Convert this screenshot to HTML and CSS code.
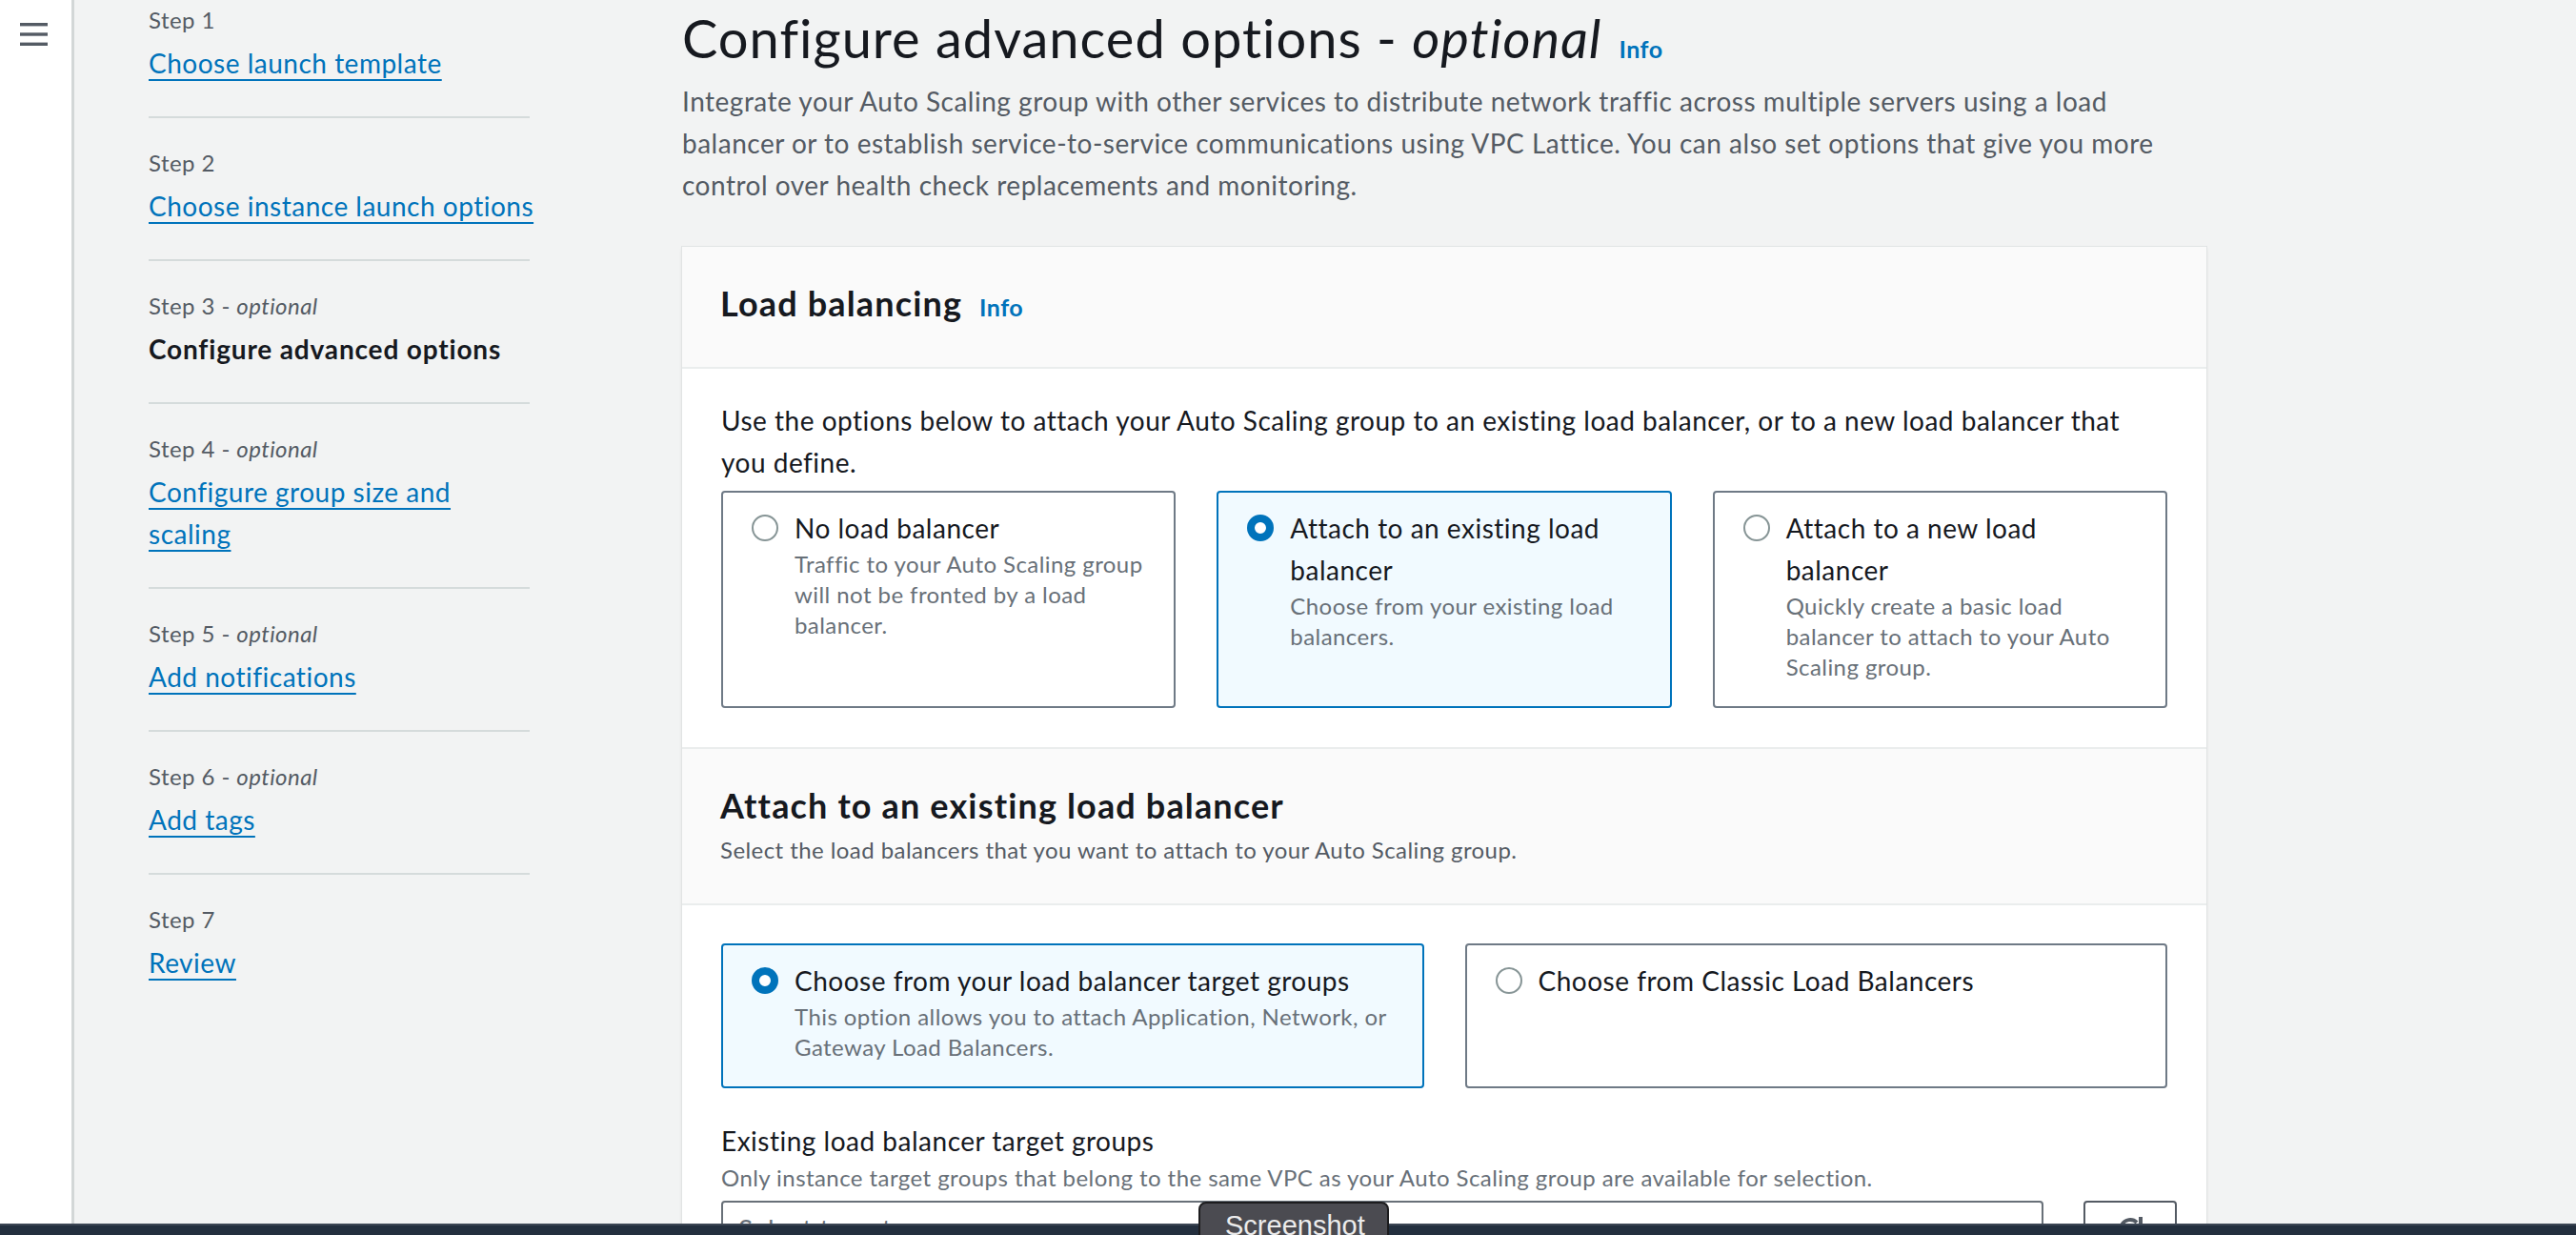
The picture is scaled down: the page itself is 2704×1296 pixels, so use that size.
FILE: index.html
```html
<!DOCTYPE html>
<html lang="en">
<head>
<meta charset="utf-8">
<title>Configure advanced options</title>
<link rel="stylesheet" href="styles.css">
</head>
<body>
<div class="app">
  <aside class="rail">
    <svg width="29" height="24" viewBox="0 0 29 24" aria-hidden="true"><rect x="0" y="0" width="29" height="3.4" fill="#545b64"/><rect x="0" y="10.3" width="29" height="3.4" fill="#545b64"/><rect x="0" y="20.6" width="29" height="3.4" fill="#545b64"/></svg>
  </aside>
  <nav class="steps">
    <ol>
      <li><div class="step-label">Step 1</div><div class="step-link"><a href="#">Choose launch template</a></div></li>
      <li><div class="step-label">Step 2</div><div class="step-link"><a href="#">Choose instance launch options</a></div></li>
      <li><div class="step-label">Step 3 - <i>optional</i></div><div class="step-link current">Configure advanced options</div></li>
      <li><div class="step-label">Step 4 - <i>optional</i></div><div class="step-link"><a href="#">Configure group size and scaling</a></div></li>
      <li><div class="step-label">Step 5 - <i>optional</i></div><div class="step-link"><a href="#">Add notifications</a></div></li>
      <li><div class="step-label">Step 6 - <i>optional</i></div><div class="step-link"><a href="#">Add tags</a></div></li>
      <li><div class="step-label">Step 7</div><div class="step-link"><a href="#">Review</a></div></li>
    </ol>
  </nav>
  <main class="content">
    <header class="page-head">
      <h1 class="page-title">Configure advanced options - <i>optional</i><a class="info" href="#">Info</a></h1>
      <p class="page-desc">Integrate your Auto Scaling group with other services to distribute network traffic across multiple servers using a load balancer or to establish service-to-service communications using VPC Lattice. You can also set options that give you more control over health check replacements and monitoring.</p>
    </header>
    <section class="container">
      <div class="c-head c-head-first">
        <h2 class="c-title">Load balancing<a class="info" href="#">Info</a></h2>
      </div>
      <div class="c-body c-body-first">
        <p class="c-text">Use the options below to attach your Auto Scaling group to an existing load balancer, or to a new load balancer that you define.</p>
        <div class="tiles tiles-3">
          <div class="tile">
            <span class="radio"></span>
            <div class="tile-text"><div class="tile-title">No load balancer</div><div class="tile-desc">Traffic to your Auto Scaling group will not be fronted by a load balancer.</div></div>
          </div>
          <div class="tile tile-on">
            <span class="radio radio-on"></span>
            <div class="tile-text"><div class="tile-title">Attach to an existing load balancer</div><div class="tile-desc">Choose from your existing load balancers.</div></div>
          </div>
          <div class="tile">
            <span class="radio"></span>
            <div class="tile-text"><div class="tile-title">Attach to a new load balancer</div><div class="tile-desc">Quickly create a basic load balancer to attach to your Auto Scaling group.</div></div>
          </div>
        </div>
      </div>
      <div class="c-head c-head-second">
        <h2 class="c-title">Attach to an existing load balancer</h2>
        <p class="c-sub">Select the load balancers that you want to attach to your Auto Scaling group.</p>
      </div>
      <div class="c-body c-body-second">
        <div class="tiles tiles-2">
          <div class="tile tile-on">
            <span class="radio radio-on"></span>
            <div class="tile-text"><div class="tile-title">Choose from your load balancer target groups</div><div class="tile-desc">This option allows you to attach Application, Network, or Gateway Load Balancers.</div></div>
          </div>
          <div class="tile">
            <span class="radio"></span>
            <div class="tile-text"><div class="tile-title">Choose from Classic Load Balancers</div></div>
          </div>
        </div>
        <div class="field">
          <div class="field-label">Existing load balancer target groups</div>
          <p class="field-hint">Only instance target groups that belong to the same VPC as your Auto Scaling group are available for selection.</p>
          <div class="field-row">
            <div class="select"><span class="placeholder">Select target groups</span>
              <svg class="caret" width="19" height="12" viewBox="0 0 19 12" aria-hidden="true"><path d="M1 1h17l-8.5 10z" fill="#545b64" stroke="#545b64" stroke-width="2" stroke-linejoin="round"/></svg>
            </div>
            <button class="refresh" type="button" aria-label="Refresh">
              <svg width="32" height="32" viewBox="0 0 32 32" aria-hidden="true"><path d="M26 16a10 10 0 1 1-3-7.1" fill="none" stroke="#545b64" stroke-width="4"/><path d="M27 3v9h-9" fill="none" stroke="#545b64" stroke-width="4" stroke-linejoin="round"/></svg>
            </button>
          </div>
        </div>
      </div>
    </section>
  </main>
</div>
<div class="taskbar"></div>
<div class="shot-tab">Screenshot</div>
</body>
</html>
```

FILE: styles.css
```css
* { box-sizing: border-box; margin: 0; padding: 0; }
html, body { width: 2704px; height: 1296px; }
body {
  font-family: Lato, "Liberation Sans", sans-serif;
  color: #16191f;
  background: #f2f3f3;
  overflow: hidden;
}
a { color: #0073bb; }

.app { display: flex; height: 1296px; }

.rail {
  width: 78px;
  flex: none;
  background: #fff;
  border-right: 3px solid #d3d7d7;
  padding: 24px 0 0 21px;
}
.rail svg { display: block; }

.steps { width: 400px; flex: none; margin-left: 78px; }
.steps ol { list-style: none; }
.steps li { padding: 31px 0 34px; border-bottom: 2px solid #d5dbdb; }
.steps li:first-child { padding-top: 5px; }
.steps li:last-child { border-bottom: none; }
.step-label { font-size: 24px; line-height: 32px; color: #545b64; margin-bottom: 7px; letter-spacing: 0.018em; }
.step-label i { font-style: italic; }
.step-link { font-size: 28px; line-height: 44px; letter-spacing: 0.018em; margin-right: -6px; }
.step-link a {
  text-decoration: underline;
  text-decoration-thickness: 2px;
  text-underline-offset: 6px;
}
.step-link.current { font-weight: 700; color: #16191f; letter-spacing: 0.03em; }

.content { width: 1600px; flex: none; margin-left: 160px; padding-top: 8px; }

.page-title { font-size: 56px; line-height: 64px; font-weight: 400; letter-spacing: 0.018em; }
.page-title i { font-style: italic; }
.info {
  font-size: 25px;
  line-height: 1;
  font-weight: 700;
  text-decoration: none;
  margin-left: 18px;
  font-style: normal;
  letter-spacing: 0.02em;
}
.page-desc { font-size: 28px; line-height: 44px; color: #545b64; margin-top: 12px; letter-spacing: 0.018em; }

.container {
  margin-top: 43px;
  background: #fff;
  box-shadow: 0 0 0 1px #e1e4e4, 0 2px 3px rgba(0, 28, 36, 0.15);
}
.c-head { background: #fafafa; padding: 0 40px; border-bottom: 2px solid #eaeded; }
.c-head-first { padding-top: 37px; padding-bottom: 45px; }
.c-head-second { padding-top: 37px; padding-bottom: 40px; border-top: 2px solid #eaeded; }
.c-title { font-size: 36px; line-height: 44px; font-weight: 700; letter-spacing: 0.032em; }
.c-sub { font-size: 24px; line-height: 32px; color: #545b64; margin-top: 9px; letter-spacing: 0.018em; }
.c-body { padding: 0 41px; }
.c-body-first { padding-top: 32px; padding-bottom: 41px; }
.c-body-second { padding-top: 40px; padding-bottom: 40px; }
.c-text { font-size: 28px; line-height: 44px; letter-spacing: 0.018em; }

.tiles { display: grid; gap: 43px; }
.tiles-3 { grid-template-columns: repeat(3, 1fr); margin-top: 8px; }
.tiles-2 { grid-template-columns: repeat(2, 1fr); }
.tile {
  display: flex;
  gap: 17px;
  border: 2px solid #6f7a86;
  border-radius: 4px;
  padding: 15px 30px 25px;
  background: #fff;
}
.tile-on { border-color: #0073bb; background: #f1faff; }
.radio {
  flex: none;
  width: 28px;
  height: 28px;
  margin-top: 8px;
  border: 2px solid #879596;
  border-radius: 50%;
  background: #fff;
}
.radio-on { border: 8px solid #0073bb; }
.tile-title { font-size: 28px; line-height: 44px; letter-spacing: 0.018em; }
.tile-desc { font-size: 24px; line-height: 32px; color: #687078; letter-spacing: 0.018em; }

.field { margin-top: 33px; }
.field-label { font-size: 28px; line-height: 44px; letter-spacing: 0.018em; }
.field-hint { font-size: 24px; line-height: 32px; color: #687078; margin-top: 1px; letter-spacing: 0.018em; }
.field-row { display: flex; gap: 42px; margin-top: 8px; }
.select {
  flex: 0 0 1388px;
  display: flex;
  align-items: center;
  justify-content: space-between;
  border: 2px solid #687078;
  border-radius: 4px;
  padding: 6px 21px 6px 16px;
  font-size: 28px;
  line-height: 44px;
  letter-spacing: 0.018em;
  background: #fff;
}
.placeholder { color: #687078; }
.caret { display: block; }
.refresh {
  flex: 0 0 98px;
  height: 60px;
  border: 2px solid #545b64;
  border-radius: 4px;
  background: #fff;
  display: flex;
  align-items: center;
  justify-content: center;
}
.refresh svg { display: block; }

.taskbar {
  position: fixed;
  left: 0;
  right: 0;
  bottom: 0;
  height: 12px;
  background: #232f3e;
  border-top: 2px solid #3c4654;
}
.shot-tab {
  position: fixed;
  left: 1258px;
  top: 1261px;
  width: 200px;
  height: 60px;
  background: #4b4b51;
  border: 2px solid #1c1c1e;
  border-radius: 8px 8px 0 0;
  color: #ececec;
  font-family: "Liberation Sans", Arial, sans-serif;
  font-size: 29px;
  line-height: 34px;
  padding: 6px 0 0 26px;
}
```
